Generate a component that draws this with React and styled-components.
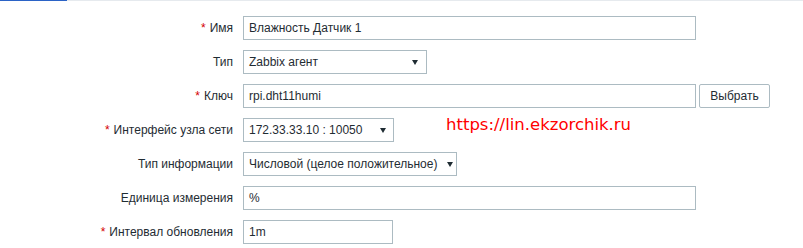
import React from "react";
import styled, { createGlobalStyle } from "styled-components";

const Global = createGlobalStyle`
  html, body { margin: 0; padding: 0; background: #ffffff; }
  body { font-family: "Liberation Sans", Arial, sans-serif; }
`;

const Page = styled.div`
  position: relative;
  width: 803px;
  height: 248px;
  overflow: hidden;
  background: #fff;
`;

const TabBar = styled.div`
  height: 1px;
  background: #e6eaee;
  display: flex;
`;

const ActiveTab = styled.div`
  width: 67px;
  height: 1px;
  background: #2b63c6;
`;

const Form = styled.div`
  display: flex;
  flex-direction: column;
  gap: 10px;
  padding-top: 15px;
`;

const Row = styled.div`
  display: grid;
  grid-template-columns: 233px auto;
  column-gap: 10px;
  align-items: center;
  height: 24px;
`;

const Label = styled.label`
  text-align: right;
  font-size: 12px;
  color: #1f2c33;
  white-space: nowrap;
`;

const Req = styled.span`
  color: #d40000;
  margin-right: 4px;
`;

const Controls = styled.div`
  display: flex;
  gap: 3px;
  align-items: center;
`;

const Field = styled.div`
  box-sizing: border-box;
  width: ${(p) => p.$w}px;
  height: 24px;
  border: 1px solid #acbbc2;
  background: #fff;
  padding: 0 5px;
  display: flex;
  align-items: center;
  font-size: 12px;
  color: #1f2c33;
  white-space: nowrap;
`;

const SelectBox = styled(Field)`
  justify-content: space-between;
  gap: 10px;
  padding-right: ${(p) => p.$pr}px;
`;

const Arrow = styled.span`
  flex: none;
  width: 0;
  height: 0;
  border-left: 3px solid transparent;
  border-right: 3px solid transparent;
  border-top: 5px solid #1f2c33;
  margin-top: 1px;
`;

const Button = styled.div`
  box-sizing: border-box;
  width: 71px;
  height: 24px;
  border: 1px solid #acbbc2;
  border-radius: 2px;
  background: #fff;
  display: flex;
  align-items: center;
  justify-content: center;
  font-size: 12px;
  color: #1f2c33;
`;

const Watermark = styled.div`
  position: absolute;
  left: 446px;
  top: 115px;
  font-family: "DejaVu Sans", Verdana, sans-serif;
  font-size: 16.5px;
  color: #ff0000;
  line-height: 20px;
`;

const Select = ({ w, pr = 8, children }) => (
  <SelectBox $w={w} $pr={pr}>
    <span>{children}</span>
    <Arrow />
  </SelectBox>
);

export default function App() {
  return (
    <Page>
      <Global />
      <TabBar>
        <ActiveTab />
      </TabBar>
      <Form>
        <Row>
          <Label><Req>*</Req>Имя</Label>
          <Field $w={453}>Влажность Датчик 1</Field>
        </Row>
        <Row>
          <Label>Тип</Label>
          <Controls><Select w={184} pr={8}>Zabbix агент</Select></Controls>
        </Row>
        <Row>
          <Label><Req>*</Req>Ключ</Label>
          <Controls>
            <Field $w={453}>rpi.dht11humi</Field>
            <Button>Выбрать</Button>
          </Controls>
        </Row>
        <Row>
          <Label><Req>*</Req>Интерфейс узла сети</Label>
          <Controls><Select w={151} pr={7}>172.33.33.10 : 10050</Select></Controls>
        </Row>
        <Row>
          <Label>Тип информации</Label>
          <Controls><Select w={214} pr={5}>Числовой (целое положительное)</Select></Controls>
        </Row>
        <Row>
          <Label>Единица измерения</Label>
          <Field $w={453}>%</Field>
        </Row>
        <Row>
          <Label><Req>*</Req>Интервал обновления</Label>
          <Field $w={150}>1m</Field>
        </Row>
      </Form>
      <Watermark>https://lin.ekzorchik.ru</Watermark>
    </Page>
  );
}
